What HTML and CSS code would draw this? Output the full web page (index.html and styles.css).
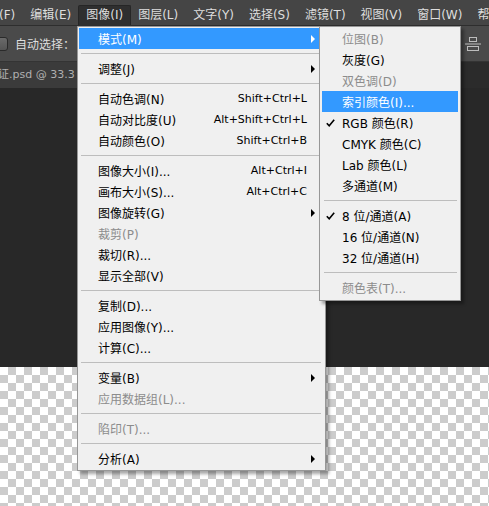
FILE: index.html
```html
<!DOCTYPE html>
<html lang="zh-CN">
<head>
<meta charset="utf-8">
<title>Photoshop 图像菜单</title>
<link rel="stylesheet" href="styles.css">
</head>
<body>
<div class="app">
  <div class="menubar">
    <span class="mb-item first">文件(F)</span>
    <span class="mb-item">编辑(E)</span>
    <span class="mb-item active">图像(I)</span>
    <span class="mb-item">图层(L)</span>
    <span class="mb-item">文字(Y)</span>
    <span class="mb-item">选择(S)</span>
    <span class="mb-item">滤镜(T)</span>
    <span class="mb-item">视图(V)</span>
    <span class="mb-item">窗口(W)</span>
    <span class="mb-item">帮助(H)</span>
  </div>
  <div class="toolbar">
    <span class="checkbox"></span>
    <span class="tb-label">自动选择：</span>
    <svg class="align-icon" width="16" height="16" viewBox="0 0 16 16">
      <rect x="4.5" y="1.5" width="7" height="4" fill="none" stroke="#bdbdbd"/>
      <line x1="0" y1="8" x2="16" y2="8" stroke="#bdbdbd"/>
      <rect x="2.5" y="10.5" width="11" height="4" fill="none" stroke="#bdbdbd"/>
    </svg>
  </div>
  <div class="tabrow">
    <div class="tab">证.psd @ 33.3</div>
    <div class="tab-rest"></div>
  </div>
  <div class="canvas-dark"></div>
  <div class="checker"></div>

  <div class="menu main-menu">
    <div class="item hl"><span class="label">模式(M)</span><span class="arrow white"></span></div>
    <div class="sep"></div>
    <div class="item"><span class="label">调整(J)</span><span class="arrow"></span></div>
    <div class="sep"></div>
    <div class="item"><span class="label">自动色调(N)</span><span class="sc">Shift+Ctrl+L</span></div>
    <div class="item"><span class="label">自动对比度(U)</span><span class="sc">Alt+Shift+Ctrl+L</span></div>
    <div class="item"><span class="label">自动颜色(O)</span><span class="sc">Shift+Ctrl+B</span></div>
    <div class="sep"></div>
    <div class="item"><span class="label">图像大小(I)...</span><span class="sc">Alt+Ctrl+I</span></div>
    <div class="item"><span class="label">画布大小(S)...</span><span class="sc">Alt+Ctrl+C</span></div>
    <div class="item"><span class="label">图像旋转(G)</span><span class="arrow"></span></div>
    <div class="item dis"><span class="label">裁剪(P)</span></div>
    <div class="item"><span class="label">裁切(R)...</span></div>
    <div class="item"><span class="label">显示全部(V)</span></div>
    <div class="sep"></div>
    <div class="item"><span class="label">复制(D)...</span></div>
    <div class="item"><span class="label">应用图像(Y)...</span></div>
    <div class="item"><span class="label">计算(C)...</span></div>
    <div class="sep"></div>
    <div class="item"><span class="label">变量(B)</span><span class="arrow"></span></div>
    <div class="item dis"><span class="label">应用数据组(L)...</span></div>
    <div class="sep"></div>
    <div class="item dis"><span class="label">陷印(T)...</span></div>
    <div class="sep"></div>
    <div class="item"><span class="label">分析(A)</span><span class="arrow"></span></div>
  </div>

  <div class="menu sub-menu">
    <div class="item dis"><span class="chk"></span><span class="label">位图(B)</span></div>
    <div class="item"><span class="chk"></span><span class="label">灰度(G)</span></div>
    <div class="item dis"><span class="chk"></span><span class="label">双色调(D)</span></div>
    <div class="item hl"><span class="chk"></span><span class="label">索引颜色(I)...</span></div>
    <div class="item"><span class="chk"><svg width="9" height="8" viewBox="0 0 9 8"><path d="M0.8 4.2 L3.2 6.8 L8.2 0.8" fill="none" stroke="#000" stroke-width="1.6"/></svg></span><span class="label">RGB 颜色(R)</span></div>
    <div class="item"><span class="chk"></span><span class="label">CMYK 颜色(C)</span></div>
    <div class="item"><span class="chk"></span><span class="label">Lab 颜色(L)</span></div>
    <div class="item"><span class="chk"></span><span class="label">多通道(M)</span></div>
    <div class="sep"></div>
    <div class="item"><span class="chk"><svg width="9" height="8" viewBox="0 0 9 8"><path d="M0.8 4.2 L3.2 6.8 L8.2 0.8" fill="none" stroke="#000" stroke-width="1.6"/></svg></span><span class="label">8 位/通道(A)</span></div>
    <div class="item"><span class="chk"></span><span class="label">16 位/通道(N)</span></div>
    <div class="item"><span class="chk"></span><span class="label">32 位/通道(H)</span></div>
    <div class="sep"></div>
    <div class="item dis"><span class="chk"></span><span class="label">颜色表(T)...</span></div>
  </div>
</div>
</body>
</html>
```

FILE: styles.css
```css
* { box-sizing: border-box; }

html, body {
  margin: 0;
  padding: 0;
  width: 489px;
  height: 506px;
  overflow: hidden;
  background: #282828;
}

body {
  font-family: "DejaVu Sans", "Noto Sans CJK SC", sans-serif;
  font-size: 12px;
}

.app {
  position: relative;
  width: 489px;
  height: 506px;
  overflow: hidden;
  display: flex;
  flex-direction: column;
}

/* ---------- menu bar ---------- */
.menubar {
  height: 26px;
  flex: none;
  background: #454545;
  border-bottom: 1px solid #2e2e2e;
  display: flex;
  align-items: flex-end;
  gap: 1px;
  white-space: nowrap;
  color: #dedede;
}

.mb-item {
  height: 20px;
  line-height: 18px;
  padding: 0 6px;
  border: 1px solid transparent;
  border-bottom: none;
  border-radius: 2px 2px 0 0;
  flex: none;
}

.mb-item.first { margin-left: -32px; }

.mb-item.active {
  background: #2f2f2f;
  border-color: #262626;
  padding: 0 7px;
  margin: 0 -1px;
}

/* ---------- options bar ---------- */
.toolbar {
  height: 36px;
  flex: none;
  background: #4a4a4a;
  border-bottom: 1px solid #343434;
  display: flex;
  align-items: center;
  color: #dedede;
  white-space: nowrap;
}

.checkbox {
  width: 14px;
  height: 14px;
  margin-left: -6px;
  border: 1px solid #2a2a2a;
  border-radius: 3px;
  background: linear-gradient(#6a6a6a, #555555);
  flex: none;
}

.tb-label {
  margin-left: 7px;
}

.align-icon {
  margin-left: auto;
  margin-right: 8px;
  flex: none;
}

/* ---------- document tab row ---------- */
.tabrow {
  height: 26px;
  flex: none;
  background: #2b2b2b;
  display: flex;
}

.tab {
  width: 77px;
  flex: none;
  background: #3b3b3b;
  color: #b0b0b0;
  font-size: 11px;
  line-height: 26px;
  text-indent: -2px;
  white-space: nowrap;
  overflow: hidden;
}

.tab-rest {
  width: 183px;
  flex: none;
  background: #3b3b3b;
}

.canvas-dark {
  height: 279px;
  flex: none;
  background: #282828;
}

.checker {
  flex: 1;
  background-color: #ffffff;
  background-image: repeating-conic-gradient(#cccccc 0 25%, #ffffff 0 50%);
  background-size: 16px 16px;
  background-position: 0 0;
}

/* ---------- drop-down menus ---------- */
.menu {
  position: absolute;
  background: #f0f0f0;
  border: 1px solid #979797;
  box-shadow: 3px 3px 3px rgba(0, 0, 0, 0.35);
  color: #000;
  white-space: nowrap;
}

.main-menu {
  left: 77px;
  top: 26px;
  width: 249px;
  padding: 1px;
}

.sub-menu {
  left: 319px;
  top: 26px;
  width: 142px;
  padding: 1px 2px 2px 2px;
}

.item {
  height: 21px;
  display: flex;
  align-items: center;
}

.main-menu .item {
  padding: 0 9px 0 19px;
}

.sub-menu .item {
  padding: 0 8px 0 0;
}

.item .label { flex: 1; }

.item.hl {
  background: #3399ff;
  color: #ffffff;
}

.item.dis { color: #8c8c8c; }

.sc {
  font-size: 11px;
  margin-right: 8px;
}

.arrow {
  width: 0;
  height: 0;
  border-top: 4px solid transparent;
  border-bottom: 4px solid transparent;
  border-left: 4px solid #000;
  flex: none;
}

.arrow.white { border-left-color: #ffffff; }

.chk {
  width: 20px;
  flex: none;
  display: flex;
  align-items: center;
  padding-left: 4px;
}

.chk svg { display: block; }

.sep {
  height: 9px;
  display: flex;
  align-items: center;
  padding: 0 3px 0 2px;
}

.sep::before {
  content: "";
  display: block;
  width: 100%;
  height: 1px;
  background: #bdbdbd;
}

.sub-menu .sep { padding: 0 1px 0 2px; }
```
